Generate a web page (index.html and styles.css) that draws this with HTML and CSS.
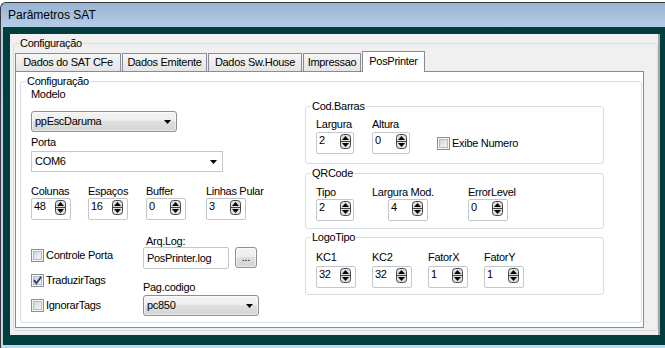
FILE: index.html
```html
<!DOCTYPE html>
<html lang="pt-BR">
<head>
<meta charset="utf-8">
<title>Parâmetros SAT</title>
<link rel="stylesheet" href="styles.css">
</head>
<body>
<svg class="defs" aria-hidden="true">
  <symbol id="spin" viewBox="0 0 11 15">
    <rect x="0.5" y="0.5" width="10" height="14" rx="3" fill="#dedede" stroke="#454545"/>
    <path d="M1 7.5h9" stroke="#454545"/>
    <path d="M5.5 2 9 6H2z" fill="#000"/>
    <path d="M2 9h7l-3.5 4z" fill="#000"/>
  </symbol>
  <symbol id="arrow" viewBox="0 0 7 4">
    <path d="M0 0h7L3.5 4z" fill="#000"/>
  </symbol>
  <symbol id="tick" viewBox="0 0 11 11">
    <path d="M2 5.2 4.4 8.2 9.2 1.8" fill="none" stroke="#24408f" stroke-width="1.9"/>
  </symbol>
</svg>
<div class="window">
  <div class="titlebar">Parâmetros SAT</div>
  <div class="frame">
    <div class="client">
      <div class="group outer">
        <div class="group-title">Configuração</div>
        <div class="tabs">
          <div class="tab tab-sat">Dados do SAT CFe</div>
          <div class="tab tab-emit">Dados Emitente</div>
          <div class="tab tab-sw">Dados Sw.House</div>
          <div class="tab tab-imp">Impressao</div>
          <div class="tab tab-pos active">PosPrinter</div>
        </div>
        <div class="panel">
          <div class="group inner">
            <div class="group-title">Configuração</div>
            <div class="cols">
              <div class="left">
                <div class="lbl">Modelo</div>
                <div class="combo btnlook combo-modelo"><span>ppEscDaruma</span><svg class="arrow"><use href="#arrow"/></svg></div>
                <div class="lbl lbl-porta">Porta</div>
                <div class="combo editlook combo-porta"><span>COM6</span><svg class="arrow"><use href="#arrow"/></svg></div>
                <div class="fields-left">
                  <div class="field"><div class="lbl">Colunas</div><div class="spin"><span class="val">48</span><svg class="spin-btn"><use href="#spin"/></svg></div></div>
                  <div class="field"><div class="lbl">Espaços</div><div class="spin"><span class="val">16</span><svg class="spin-btn"><use href="#spin"/></svg></div></div>
                  <div class="field"><div class="lbl">Buffer</div><div class="spin"><span class="val">0</span><svg class="spin-btn"><use href="#spin"/></svg></div></div>
                  <div class="field"><div class="lbl">Linhas Pular</div><div class="spin"><span class="val">3</span><svg class="spin-btn"><use href="#spin"/></svg></div></div>
                </div>
                <div class="lower">
                  <div class="checks">
                    <div class="check"><span class="box"></span>Controle Porta</div>
                    <div class="check"><span class="box"><svg class="tick"><use href="#tick"/></svg></span>TraduzirTags</div>
                    <div class="check"><span class="box"></span>IgnorarTags</div>
                  </div>
                  <div class="files">
                    <div class="lbl lbl-arq">Arq.Log:</div>
                    <div class="file-row">
                      <div class="edit">PosPrinter.log</div>
                      <div class="btnlook btn-dots">...</div>
                    </div>
                    <div class="lbl lbl-pag">Pag.codigo</div>
                    <div class="combo btnlook combo-pag"><span>pc850</span><svg class="arrow"><use href="#arrow"/></svg></div>
                  </div>
                </div>
              </div>
              <div class="right">
                <div class="group sub cod">
                  <div class="group-title">Cod.Barras</div>
                  <div class="sub-row row-cod">
                    <div class="field"><div class="lbl">Largura</div><div class="spin narrow"><span class="val">2</span><svg class="spin-btn"><use href="#spin"/></svg></div></div>
                    <div class="field"><div class="lbl">Altura</div><div class="spin narrow"><span class="val">0</span><svg class="spin-btn"><use href="#spin"/></svg></div></div>
                    <div class="check check-exibe"><span class="box"></span>Exibe Numero</div>
                  </div>
                </div>
                <div class="group sub qr">
                  <div class="group-title">QRCode</div>
                  <div class="sub-row row-qr">
                    <div class="field"><div class="lbl">Tipo</div><div class="spin narrow"><span class="val">2</span><svg class="spin-btn"><use href="#spin"/></svg></div></div>
                    <div class="field field-mod"><div class="lbl">Largura Mod.</div><div class="spin"><span class="val">4</span><svg class="spin-btn"><use href="#spin"/></svg></div></div>
                    <div class="field"><div class="lbl">ErrorLevel</div><div class="spin"><span class="val">0</span><svg class="spin-btn"><use href="#spin"/></svg></div></div>
                  </div>
                </div>
                <div class="group sub logo">
                  <div class="group-title">LogoTipo</div>
                  <div class="sub-row row-logo">
                    <div class="field"><div class="lbl">KC1</div><div class="spin"><span class="val">32</span><svg class="spin-btn"><use href="#spin"/></svg></div></div>
                    <div class="field"><div class="lbl">KC2</div><div class="spin"><span class="val">32</span><svg class="spin-btn"><use href="#spin"/></svg></div></div>
                    <div class="field"><div class="lbl">FatorX</div><div class="spin"><span class="val">1</span><svg class="spin-btn"><use href="#spin"/></svg></div></div>
                    <div class="field"><div class="lbl">FatorY</div><div class="spin"><span class="val">1</span><svg class="spin-btn"><use href="#spin"/></svg></div></div>
                  </div>
                </div>
              </div>
            </div>
          </div>
        </div>
      </div>
    </div>
  </div>
</div>
</body>
</html>
```

FILE: styles.css
```css
* { box-sizing: border-box; }
html, body { margin: 0; padding: 0; }
body {
  width: 665px;
  height: 348px;
  overflow: hidden;
  background: #ffffff;
  font-family: "Liberation Sans", Arial, sans-serif;
  font-size: 11px;
  line-height: 13px;
  letter-spacing: -0.3px;
  color: #000;
}
.defs { display: block; width: 0; height: 0; overflow: hidden; }

/* window chrome */
.window {
  margin-top: 2px;
  height: 346px;
  border-top: 1px solid #3b3b3b;
  border-left: 1px solid #3b3b3b;
  border-top-left-radius: 6px;
  background: linear-gradient(to bottom, #97b3d3 0, #b6cee8 24px, #c0d6ec 100%);
  padding-bottom: 3px;
  display: flex;
  flex-direction: column;
}
.titlebar {
  height: 24px;
  flex: none;
  padding: 1px 0 0 7px;
  font-size: 12px;
  line-height: 23px;
  letter-spacing: 0;
}
.frame {
  flex: 1;
  margin-left: 2px;
  background: #023e3d;
  padding: 7px 5px 10px 7px;
}
.client {
  width: 650px;
  height: 301px;
  background: #f0f0f0;
  border-right: 2px solid #a6a6a6;
  padding: 9px 0 0 3px;
}

/* group boxes */
.group {
  border: 1px solid #d5dfe5;
  border-radius: 3px;
  background: #fff;
}
.group-title {
  width: max-content;
  margin: -7px 0 0 5px;
  padding: 0 1px;
  background: inherit;
  line-height: 13px;
}
.group.outer {
  width: 645px;
  height: 288px;
  background: #f0f0f0;
}

/* tabs */
.tabs {
  display: flex;
  align-items: flex-end;
  margin: 1px 0 0 1px;
}
.tab {
  height: 18px;
  margin-right: 1px;
  border: 1px solid #898c95;
  border-bottom: none;
  padding-top: 2px;
  text-align: center;
  white-space: nowrap;
  background: linear-gradient(to bottom, #f6f6f6, #e4e4e4);
}
.tab-sat { width: 106px; }
.tab-emit { width: 85px; }
.tab-sw { width: 94px; }
.tab-imp { width: 58px; }
.tab-pos { width: 63px; }
.tab.active {
  height: 21px;
  margin-bottom: -1px;
  padding-top: 3px;
  background: #fff;
  position: relative;
  z-index: 1;
}
.panel {
  margin-left: 1px;
  width: 629px;
  height: 257px;
  border: 1px solid #898c95;
  background: #fff;
  padding: 9px 0 4px 4px;
}
.group.inner {
  width: 622px;
  height: 242px;
}
.cols {
  display: grid;
  grid-template-columns: 274px 299px;
  align-items: start;
  padding-left: 10px;
}

/* generic controls */
.lbl { line-height: 13px; white-space: nowrap; }
.combo {
  display: flex;
  align-items: center;
  justify-content: space-between;
  height: 21px;
  padding: 0 5px 0 3px;
}
.btnlook {
  border: 1px solid #8e8f8f;
  border-radius: 3px;
  background: linear-gradient(to bottom, #f4f4f4 0, #ececec 50%, #dfdfdf 50%, #d4d4d4 100%);
  box-shadow: inset 0 0 0 1px rgba(255, 255, 255, 0.55);
}
.editlook {
  border: 1px solid #c3c7cd;
  background: #fff;
}
.arrow { width: 7px; height: 4px; flex: none; }

.spin {
  display: flex;
  align-items: flex-start;
  width: 40px;
  height: 22px;
  border: 1px solid #c3c7cd;
  border-radius: 2px;
  padding: 1px 0 0 2px;
  background: #fff;
}
.spin.narrow { width: 38px; }
.spin .val { width: 21px; flex: none; }
.spin-btn { width: 11px; height: 15px; flex: none; }

.check {
  display: flex;
  align-items: center;
  gap: 2px;
  height: 13px;
  white-space: nowrap;
}
.box {
  width: 13px;
  height: 13px;
  flex: none;
  border: 1px solid #8e8f8f;
  background: linear-gradient(135deg, #c9ccd1 0%, #e9ebed 60%, #f8f8f8 100%);
  box-shadow: inset 0 0 0 1px #f6f6f6, inset 0 0 0 2px #b7babe;
}
.tick { display: block; width: 11px; height: 11px; }

/* left column */
.combo-modelo { width: 146px; margin-top: 10px; }
.lbl-porta { margin-top: 4px; }
.combo-porta { width: 192px; margin-top: 2px; }
.fields-left {
  display: grid;
  grid-template-columns: 57px 58px 60px auto;
  margin-top: 13px;
}
.lower {
  display: grid;
  grid-template-columns: 112px auto;
}
.checks {
  display: flex;
  flex-direction: column;
  gap: 12px;
  padding-top: 29px;
}
.files { padding-top: 15px; }
.lbl-arq { margin-left: 3px; }
.file-row { display: flex; margin-top: -1px; }
.edit {
  display: flex;
  align-items: center;
  width: 86px;
  height: 22px;
  border: 1px solid #c3c7cd;
  border-radius: 2px;
  padding: 0 3px;
  background: #fff;
}
.btn-dots {
  display: flex;
  align-items: center;
  justify-content: center;
  width: 22px;
  height: 21px;
  margin-left: 6px;
}
.lbl-pag { margin-top: 12px; }
.combo-pag { width: 116px; margin-top: 1px; }

/* right column */
.right { padding-top: 18px; }
.sub-row { display: grid; align-items: end; padding-left: 10px; }
.row-cod { grid-template-columns: 56px 65px auto; padding-top: 5px; padding-bottom: 9px; }
.row-cod .spin { margin-top: 1px; }
.check-exibe { margin-bottom: 4px; }
.group.qr { margin-top: 9px; }
.row-qr { grid-template-columns: 56px 96px auto; padding-top: 6px; padding-bottom: 7px; }
.field-mod .spin { margin-left: 16px; }
.group.logo { margin-top: 8px; }
.row-logo { grid-template-columns: repeat(4, 56px); padding-top: 7px; padding-bottom: 6px; }
.row-logo .spin { margin-top: 2px; }
```
